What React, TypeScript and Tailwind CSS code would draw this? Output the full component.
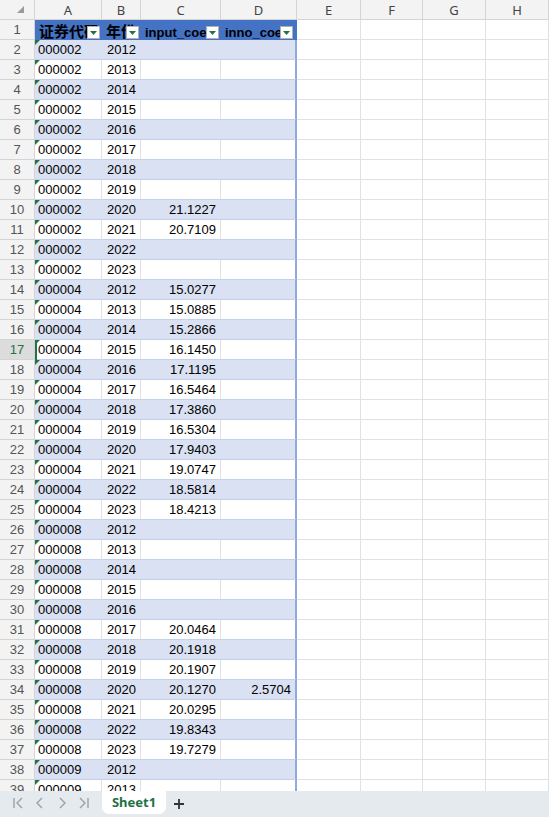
import React from "react";

const colWidths = [
  "w-[67px]",
  "w-[39px]",
  "w-[80px]",
  "w-[76px]",
  "w-[64px]",
  "w-[62px]",
  "w-[63px]",
  "w-[63px]",
];
const letters = ["A", "B", "C", "D", "E", "F", "G", "H"];

type Rec = { code: string; year: string; c?: string; d?: string };

const c4 = [
  "15.0277",
  "15.0885",
  "15.2866",
  "16.1450",
  "17.1195",
  "16.5464",
  "17.3860",
  "16.5304",
  "17.9403",
  "19.0747",
  "18.5814",
  "18.4213",
];
const c8: (string | undefined)[] = [
  undefined,
  undefined,
  undefined,
  undefined,
  undefined,
  "20.0464",
  "20.1918",
  "20.1907",
  "20.1270",
  "20.0295",
  "19.8343",
  "19.7279",
];

const rows: Rec[] = [];
for (let i = 0; i < 12; i++) {
  const y = String(2012 + i);
  rows.push({
    code: "000002",
    year: y,
    c: i === 8 ? "21.1227" : i === 9 ? "20.7109" : undefined,
  });
}
for (let i = 0; i < 12; i++) rows.push({ code: "000004", year: String(2012 + i), c: c4[i] });
for (let i = 0; i < 12; i++)
  rows.push({ code: "000008", year: String(2012 + i), c: c8[i], d: i === 8 ? "2.5704" : undefined });
rows.push({ code: "000009", year: "2012" });
rows.push({ code: "000009", year: "2013" });

function FilterButton() {
  return (
    <div className="absolute right-[2px] bottom-[1px] w-[13px] h-[13px] bg-white border border-[#b0b0b0] flex items-center justify-center">
      <svg width="7" height="4" viewBox="0 0 7 4">
        <path d="M0 0 L7 0 L3.5 4 Z" fill="#217346" />
      </svg>
    </div>
  );
}

function HeaderRow() {
  const titles = ["证券代码", "年份", "input_coef", "inno_coef"];
  return (
    <div className="flex h-5">
      <div className="w-[35px] shrink-0 bg-[#f3f3f3] border-r border-b border-[#d4d4d4] text-center text-[13px] leading-[19px] text-[#555]">
        1
      </div>
      {titles.map((t, i) => (
        <div
          key={i}
          className={`${colWidths[i]} shrink-0 relative overflow-hidden bg-[#4472c4] whitespace-nowrap pl-[4px] font-bold text-black ${
            i === 3 ? "border-r-2 border-[#4472c4]" : ""
          }`}
        >
          {i < 2 ? (
            <span className="text-[15px] leading-[21px] font-['Noto_Sans_CJK_SC',sans-serif]">{t}</span>
          ) : (
            <span className="text-[13px] leading-[21px] font-['Liberation_Sans',sans-serif]">{t}</span>
          )}
          <FilterButton />
        </div>
      ))}
      {[4, 5, 6, 7].map((i) => (
        <div key={i} className={`${colWidths[i]} shrink-0 bg-white border-r border-b border-[#e1e1e1]`} />
      ))}
    </div>
  );
}

function DataRow({ n, r }: { n: number; r: Rec }) {
  const band = n % 2 === 0;
  const selected = n === 17;
  const vals = [r.code, r.year, r.c, r.d];
  return (
    <div className="flex h-5">
      <div
        className={`w-[35px] shrink-0 border-r border-b border-[#d4d4d4] text-center text-[13px] leading-[19px] ${
          selected ? "bg-[#dcdcdc] text-[#217346]" : "bg-[#f3f3f3] text-[#555]"
        }`}
      >
        {n}
      </div>
      {vals.map((v, i) => (
        <div
          key={i}
          className={`${colWidths[i]} shrink-0 relative border-b border-b-[#c3d0ea] pt-[1px] text-[13px] leading-[18px] text-black whitespace-nowrap ${
            band ? "bg-[#d9e1f2]" : "bg-white"
          } ${
            i === 3
              ? "border-r-2 border-r-[#8ea9db]"
              : band
              ? "border-r border-r-[#d9e1f2]"
              : "border-r border-r-[#e1e1e1]"
          } ${i === 0 ? "pl-[3px] text-left" : "pr-[4px] text-right"}`}
        >
          {i === 0 && (
            <div className="absolute top-0 left-0 w-0 h-0 border-t-[5px] border-t-[#217346] border-r-[5px] border-r-transparent" />
          )}
          {selected && i === 0 && <div className="absolute top-0 bottom-[-1px] left-0 w-[2px] bg-[#217346]" />}
          {v ?? ""}
        </div>
      ))}
      {[4, 5, 6, 7].map((i) => (
        <div key={i} className={`${colWidths[i]} shrink-0 bg-white border-r border-b border-[#e1e1e1]`} />
      ))}
    </div>
  );
}

export default function App() {
  return (
    <div className="w-[549px] h-[817px] flex flex-col bg-white font-['Liberation_Sans','Noto_Sans_CJK_SC',sans-serif] overflow-hidden">
      <div className="h-[791px] overflow-hidden">
        {/* Column letters */}
        <div className="flex h-5">
          <div className="w-[35px] shrink-0 relative bg-[#f3f3f3] border-r border-b border-[#d4d4d4]">
            <svg className="absolute left-[17px] top-[6px]" width="7" height="7" viewBox="0 0 7 7">
              <path d="M7 0 L7 7 L0 7 Z" fill="#9a9a9a" />
            </svg>
          </div>
          {letters.map((l, i) => (
            <div
              key={l}
              className={`${colWidths[i]} shrink-0 bg-[#f3f3f3] border-r border-b border-[#d4d4d4] text-center text-[13px] leading-[20px] text-[#444] font-['Noto_Sans',sans-serif]`}
            >
              {l}
            </div>
          ))}
        </div>
        <HeaderRow />
        {rows.map((r, i) => (
          <DataRow key={i} n={i + 2} r={r} />
        ))}
      </div>

      {/* Sheet tabs */}
      <div className="h-[26px] bg-[#e4eaed] flex items-start">
        <div className="w-[102px] h-[24px] flex items-center pl-[13px] gap-[12px] text-[#a0a0a0]">
          <svg width="10" height="12" viewBox="0 0 10 12" fill="none" stroke="currentColor" strokeWidth="1.4">
            <path d="M1 1 V11" />
            <path d="M9 1 L4 6 L9 11" />
          </svg>
          <svg width="10" height="12" viewBox="0 0 10 12" fill="none" stroke="currentColor" strokeWidth="1.4">
            <path d="M7 1 L2 6 L7 11" />
          </svg>
          <svg width="10" height="12" viewBox="0 0 10 12" fill="none" stroke="currentColor" strokeWidth="1.4">
            <path d="M3 1 L8 6 L3 11" />
          </svg>
          <svg width="10" height="12" viewBox="0 0 10 12" fill="none" stroke="currentColor" strokeWidth="1.4">
            <path d="M1 1 L6 6 L1 11" />
            <path d="M9 1 V11" />
          </svg>
        </div>
        <div className="w-[64px] h-[23px] bg-white rounded-b-[7px] flex items-center justify-center text-[13px] font-bold text-[#1e7145] font-['Noto_Sans',sans-serif]">
          Sheet1
        </div>
        <div className="h-[26px] pl-[7px] flex items-center text-[#333]">
          <svg width="12" height="12" viewBox="0 0 12 12" stroke="currentColor" strokeWidth="1.8">
            <path d="M6 1 V11 M1 6 H11" />
          </svg>
        </div>
      </div>
    </div>
  );
}
